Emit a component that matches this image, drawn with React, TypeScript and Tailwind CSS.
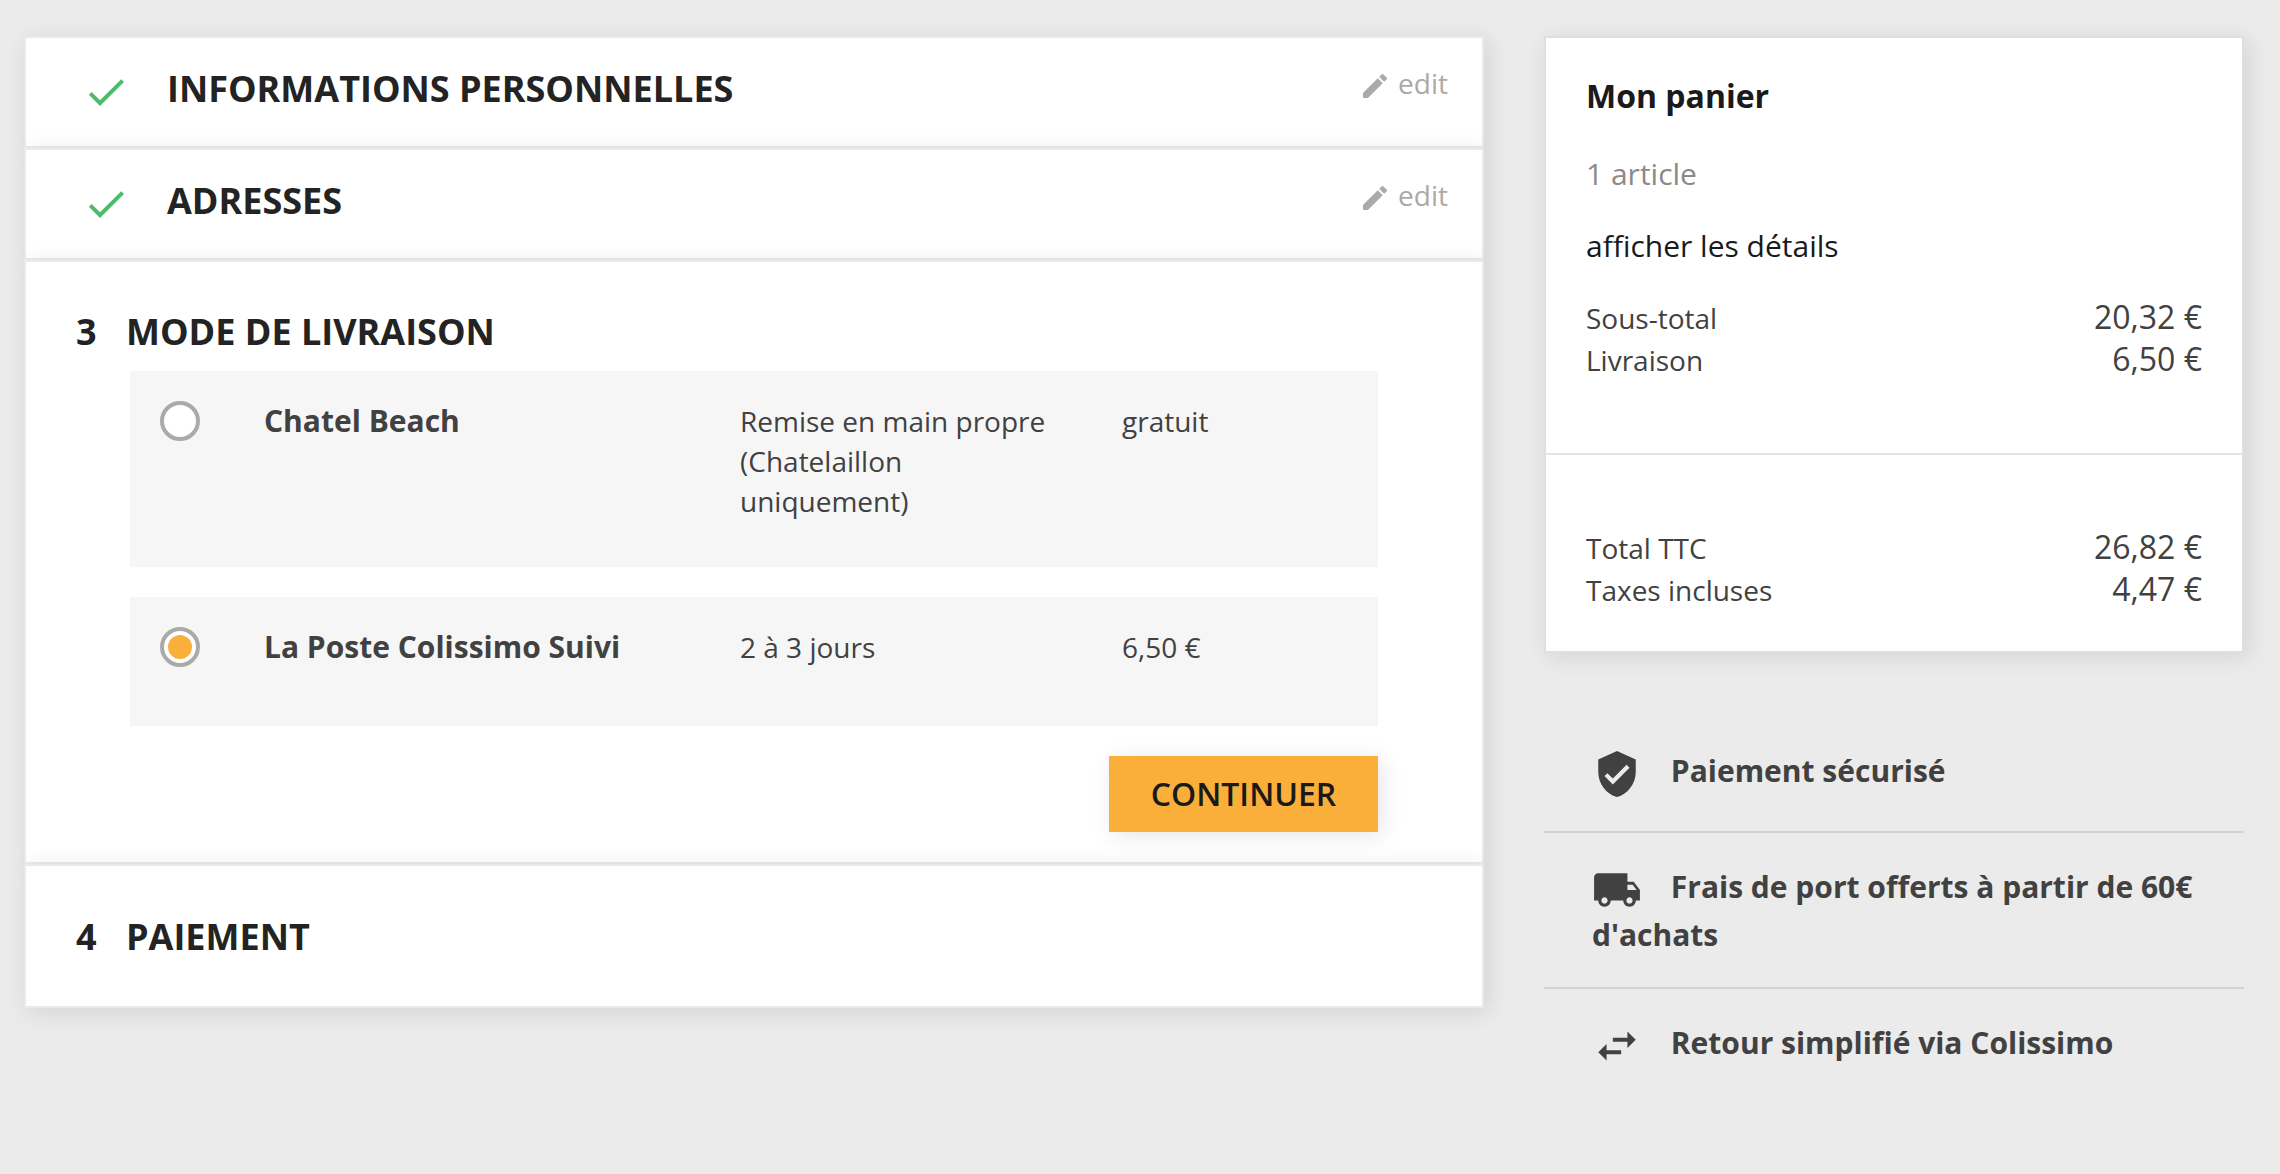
import { ReactNode } from 'react'
import { IconType } from 'react-icons'
import {
  MdCheck,
  MdEdit,
  MdLocalShipping,
  MdSwapHoriz,
  MdVerifiedUser
} from 'react-icons/md'

type DeliveryOption = {
  name: string
  delay: string
  price: string
  selected: boolean
}

const deliveryOptions: DeliveryOption[] = [
  {
    name: 'Chatel Beach',
    delay: 'Remise en main propre (Chatelaillon uniquement)',
    price: 'gratuit',
    selected: false
  },
  {
    name: 'La Poste Colissimo Suivi',
    delay: '2 à 3 jours',
    price: '6,50 €',
    selected: true
  }
]

const reassurances: { icon: IconType; text: string }[] = [
  { icon: MdVerifiedUser, text: 'Paiement sécurisé' },
  {
    icon: MdLocalShipping,
    text: "Frais de port offerts à partir de 60€ d'achats"
  },
  { icon: MdSwapHoriz, text: 'Retour simplifié via Colissimo' }
]

const Step: React.FC<{ children: ReactNode }> = ({ children }) => (
  <section className="border-2 border-[#eaeaea] bg-white shadow-[4px_4px_22px_rgba(0,0,0,0.1)]">
    {children}
  </section>
)

const DoneStep: React.FC<{ title: string }> = ({ title }) => (
  <Step>
    <div className="flex h-[108px] items-start pt-[26px] pr-[34px] pl-14">
      <MdCheck className="mt-1 size-12 shrink-0 text-[#4cbb6c]" />
      <h1 className="mt-px ml-[37px] flex-1 text-[36px] leading-[48px] font-bold text-[#232323] uppercase">
        {title}
      </h1>
      <span className="flex gap-[7px] text-[28px] leading-[38px] text-[#acaaa6]">
        <MdEdit className="mt-1.5 size-8" />
        edit
      </span>
    </div>
  </Step>
)

const StepTitle: React.FC<{ number: number; title: string }> = ({
  number,
  title
}) => (
  <h1 className="flex pl-[50px] text-[36px] leading-[48px] font-bold text-[#232323] uppercase">
    <span className="w-[50px]">{number}</span>
    {title}
  </h1>
)

const DeliveryRow: React.FC<{ option: DeliveryOption }> = ({ option }) => (
  <div className="flex min-h-[129px] items-start bg-[#f6f6f6] pt-[30px] pb-[46px] pl-[30px] text-[28px] leading-10">
    <span className="flex size-10 items-center justify-center rounded-full border-4 border-[#acaaa6] bg-white">
      {option.selected && (
        <span className="size-6 rounded-full bg-[#fbaf3b]" />
      )}
    </span>
    <span className="ml-16 w-[476px] text-[30px] font-bold">
      {option.name}
    </span>
    <span className="mr-[60px] w-[322px]">{option.delay}</span>
    <span>{option.price}</span>
  </div>
)

const CartLine: React.FC<{ label: string; value: string }> = ({
  label,
  value
}) => (
  <div className="flex h-[42px] items-baseline justify-between leading-[42px]">
    <span className="text-[28px]">{label}</span>
    <span className="text-[32px]">{value}</span>
  </div>
)

const Cart: React.FC<{}> = () => (
  <div className="border-2 border-[#dfdfdf] bg-white shadow-[4px_4px_22px_rgba(0,0,0,0.1)]">
    <div className="px-10 pt-[34px] pb-[73px]">
      <h2 className="text-[32px] leading-[48px] font-bold text-[#1a1a1a]">
        Mon panier
      </h2>
      <p className="mt-[30px] text-[30px] leading-[48px] text-[#8a8a8a]">
        1 article
      </p>
      <p className="mt-6 mb-[26px] text-[30px] leading-[48px] text-[#1a1a1a]">
        afficher les détails
      </p>
      <CartLine label="Sous-total" value="20,32 €" />
      <CartLine label="Livraison" value="6,50 €" />
    </div>
    <div className="border-t-2 border-[#e5e5e5] px-10 pt-[71px] pb-[41px]">
      <CartLine label="Total TTC" value="26,82 €" />
      <CartLine label="Taxes incluses" value="4,47 €" />
    </div>
  </div>
)

const App: React.FC<{}> = () => {
  return (
    <div className="flex h-[1174px] w-[2280px] items-start gap-[60px] overflow-hidden bg-[#ebebeb] pt-9 pl-6 font-['Open_Sans',sans-serif] text-[#414141]">
      <main className="w-[1460px]">
        <DoneStep title="Informations personnelles" />
        <DoneStep title="Adresses" />

        <Step>
          <div className="pt-[46px] pb-[30px]">
            <StepTitle number={3} title="Mode de livraison" />
            <div className="mt-[15px] ml-[104px] flex w-[1248px] flex-col gap-[30px]">
              {deliveryOptions.map(option => (
                <DeliveryRow key={option.name} option={option} />
              ))}
              <button className="h-[76px] w-[269px] self-end bg-[#fbaf3b] text-[32px] leading-[48px] font-semibold text-[#1a1a1a] uppercase shadow-[4px_4px_22px_rgba(0,0,0,0.1)]">
                Continuer
              </button>
            </div>
          </div>
        </Step>

        <Step>
          <div className="h-[140px] pt-[47px]">
            <StepTitle number={4} title="Paiement" />
          </div>
        </Step>
      </main>

      <aside className="w-[700px]">
        <Cart />
        <ul className="mt-16 divide-y-2 divide-[#d3d3d3]">
          {reassurances.map(({ icon: Icon, text }) => (
            <li
              key={text}
              className="px-12 py-8 text-[30px] leading-10 font-bold"
            >
              <Icon className="mr-[21px] inline-block size-[50px] align-middle" />{' '}
              {text}
            </li>
          ))}
        </ul>
      </aside>
    </div>
  )
}

export default App
